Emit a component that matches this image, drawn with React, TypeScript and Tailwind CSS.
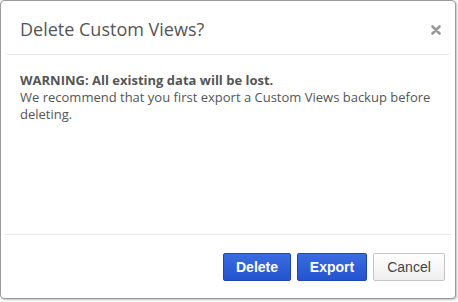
import React from "react";

export default function App() {
  return (
    <div className="w-[458px] h-[302px] bg-white">
      <div className="w-[456px] h-[299px] border border-[#9a9a9a] rounded-[4px] bg-white flex flex-col shadow-[1px_1px_2px_rgba(0,0,0,0.25)]">
        <div className="h-[54px] mx-[4px] border-b border-[#e6e6e6] rounded-b-[4px] flex items-center justify-between pl-[15px] pr-[10px]">
          <div className="text-[18px] text-[#555] pt-[4px]" style={{ fontFamily: '"Open Sans", sans-serif' }}>
            Delete Custom Views?
          </div>
          <svg width="10" height="10" viewBox="0 0 10 10" className="mt-[4px]">
            <path d="M1.5 1.5 L8.5 8.5 M8.5 1.5 L1.5 8.5" stroke="#999" strokeWidth="2.6" strokeLinecap="round" />
          </svg>
        </div>
        <div
          className="flex-1 px-[19px] pt-[17px] text-[13px] leading-[17px] text-[#555]"
          style={{ fontFamily: '"Open Sans", sans-serif' }}
        >
          <div className="font-bold">WARNING: All existing data will be lost.</div>
          <div>We recommend that you first export a Custom Views backup before deleting.</div>
        </div>
        <div className="mx-[4px] border-t border-[#e6e6e6] h-[64px] flex items-start justify-end gap-[6px] pt-[18px] pr-[6px]">
          <button
            className="w-[68px] h-[28px] rounded-[2px] border border-[#1d44b8] bg-gradient-to-b from-[#3a6ce0] to-[#2553cf] text-white font-bold text-[14px]"
            style={{ fontFamily: '"Liberation Sans", Arial, sans-serif' }}
          >
            Delete
          </button>
          <button
            className="w-[70px] h-[28px] rounded-[2px] border border-[#1d44b8] bg-gradient-to-b from-[#3a6ce0] to-[#2553cf] text-white font-bold text-[14px]"
            style={{ fontFamily: '"Liberation Sans", Arial, sans-serif' }}
          >
            Export
          </button>
          <button
            className="w-[72px] h-[28px] rounded-[2px] border border-[#c4c4c4] bg-gradient-to-b from-[#ffffff] to-[#efefef] text-[#444] text-[14px]"
            style={{ fontFamily: '"Liberation Sans", Arial, sans-serif' }}
          >
            Cancel
          </button>
        </div>
      </div>
    </div>
  );
}
